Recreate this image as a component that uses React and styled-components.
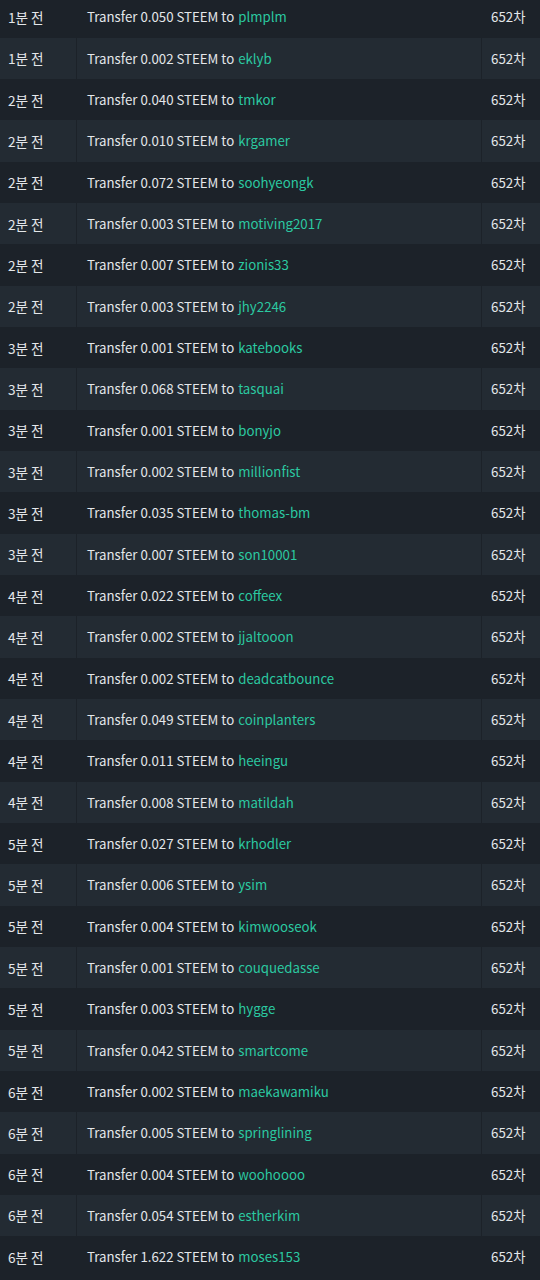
import React from "react";
import styled, { createGlobalStyle } from "styled-components";

const GlobalStyle = createGlobalStyle`
  html, body {
    margin: 0;
    padding: 0;
    background: #1c2229;
  }
  body {
    font-family: "Noto Sans CJK KR", "Noto Sans", sans-serif;
    color: #e4e7ea;
  }
`;

const transfers = [
  [1, "0.050", "plmplm"],
  [1, "0.002", "eklyb"],
  [2, "0.040", "tmkor"],
  [2, "0.010", "krgamer"],
  [2, "0.072", "soohyeongk"],
  [2, "0.003", "motiving2017"],
  [2, "0.007", "zionis33"],
  [2, "0.003", "jhy2246"],
  [3, "0.001", "katebooks"],
  [3, "0.068", "tasquai"],
  [3, "0.001", "bonyjo"],
  [3, "0.002", "millionfist"],
  [3, "0.035", "thomas-bm"],
  [3, "0.007", "son10001"],
  [4, "0.022", "coffeex"],
  [4, "0.002", "jjaltooon"],
  [4, "0.002", "deadcatbounce"],
  [4, "0.049", "coinplanters"],
  [4, "0.011", "heeingu"],
  [4, "0.008", "matildah"],
  [5, "0.027", "krhodler"],
  [5, "0.006", "ysim"],
  [5, "0.004", "kimwooseok"],
  [5, "0.001", "couquedasse"],
  [5, "0.003", "hygge"],
  [5, "0.042", "smartcome"],
  [6, "0.002", "maekawamiku"],
  [6, "0.005", "springlining"],
  [6, "0.004", "woohoooo"],
  [6, "0.054", "estherkim"],
  [6, "1.622", "moses153"],
];

const Table = styled.div`
  display: flex;
  flex-direction: column;
  margin-top: -3.7px;
`;

const Row = styled.div`
  display: grid;
  grid-template-columns: 76px 1fr 58px;
  column-gap: 1px;
  height: 41.33px;
`;

const Cell = styled.div`
  display: flex;
  align-items: center;
  padding: 0 ${(p) => p.$pad || 8}px;
  font-size: ${(p) => p.$size || 13}px;
  white-space: nowrap;
  background: ${(p) => (p.$striped ? "#232b33" : "#1c2229")};
`;

const Link = styled.a`
  color: #2bc9a1;
  text-decoration: none;
  margin-left: 4px;
`;

export default function App() {
  return (
    <>
      <GlobalStyle />
      <Table>
        {transfers.map(([min, amount, to], i) => {
          const striped = i % 2 === 1;
          return (
            <Row key={i}>
              <Cell $striped={striped} $pad={8} $size={13.6}>{min}분&nbsp;전</Cell>
              <Cell $striped={striped} $pad={10} $size={13.25}>
                Transfer {amount} STEEM to<Link href="#">{to}</Link>
              </Cell>
              <Cell $striped={striped} $pad={9} $size={13.3}>652차</Cell>
            </Row>
          );
        })}
      </Table>
    </>
  );
}
